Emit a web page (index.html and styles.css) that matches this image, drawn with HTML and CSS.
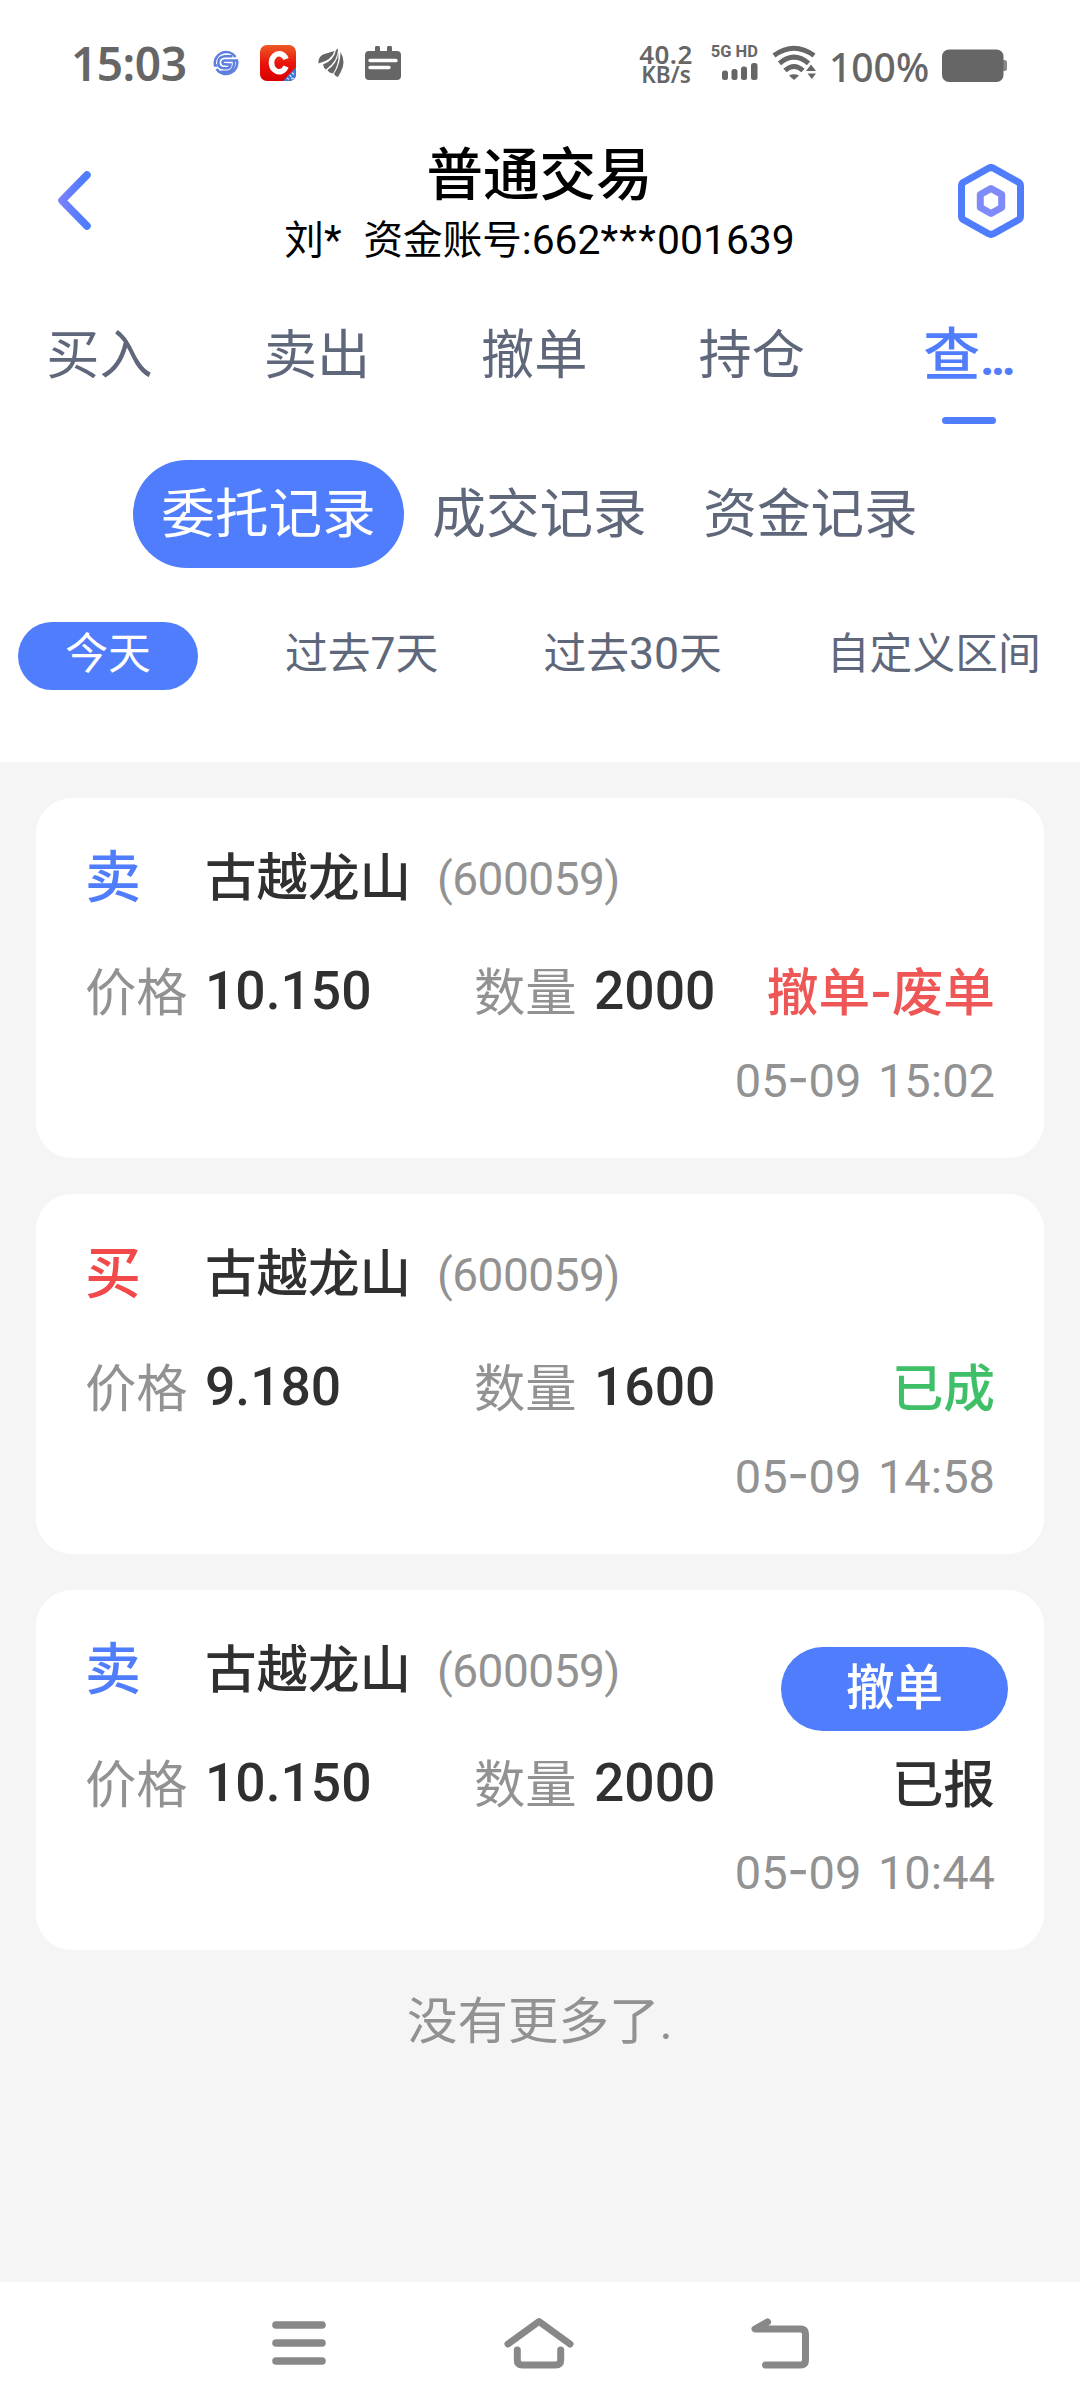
FILE: index.html
```html
<!DOCTYPE html>
<html lang="zh-CN">
<head>
<meta charset="utf-8">
<title>普通交易</title>
<link rel="stylesheet" href="styles.css">
</head>
<body>
<div class="screen">
  <header class="top">
    <div class="status">
      <span class="clock">15:03</span>
      <div class="notices">
        <svg width="26" height="26" viewBox="0 0 26 26" fill="none" stroke="#5f7fe0" stroke-width="2.500">
          <path d="M22.500 7A11.300 11.300 0 0 0 2 15.500H4.500"/>
          <path d="M3.500 19A11.300 11.300 0 0 0 24 10.500H12Q9.500 10.500 9.500 12.500T12 14.300H13.500"/>
          <path d="M19.500 6.300H12Q5.300 6.800 5.300 12.500T11 18.300H14Q17.500 18 17.500 14.500H13"/>
          <path d="M7.500 21.800H14Q20 21.500 21 14.500V11"/>
        </svg>
        <svg class="app-c" width="36" height="36" viewBox="0 0 36 36">
          <defs>
            <linearGradient id="red" x1="0" y1="0" x2="0" y2="1"><stop offset="0" stop-color="#ee5a24"/><stop offset=".5" stop-color="#e9150b"/><stop offset="1" stop-color="#d90000"/></linearGradient>
            <clipPath id="tile"><rect width="36" height="36" rx="7"/></clipPath>
          </defs>
          <g clip-path="url(#tile)">
            <rect width="36" height="36" fill="url(#red)"/>
            <path d="M36 22V36H23Z" fill="#3f78d6"/>
            <path d="M27 33l2 1.500M29.500 30l2 2M32 27.500l2 2M31 33.500h3" stroke="#c9dcff" stroke-width="1.300"/>
            <path d="M26 14A7.600 9 0 1 0 26 21.500" fill="none" stroke="#fff" stroke-width="5.600"/>
          </g>
        </svg>
        <svg class="wing" width="26" height="30" viewBox="0 0 26 30" fill="#666">
          <path d="M.5 15.500Q0 9 5 6.500Q9 5 16.500 3Q14 12 .5 15.500Z"/>
          <path d="M18 2L20 .5Q20.500 12 8 21.500Q5.500 20 5 16.500Q16 12.500 18 2Z"/>
          <path d="M20.500 5Q21 16.500 15 25.500Q11 25 9.500 22Q19 15.500 20.500 5Z"/>
          <path d="M22.500 4Q28.500 14 22.500 24.500L20 29Q17 28.500 16 25.800Q22.500 16 22.500 4Z"/>
        </svg>
        <svg width="36" height="34" viewBox="0 0 36 34">
          <path d="M4 5H10V2a2 2 0 0 1 5 0V5H22V2a2 2 0 0 1 5 0V5H32a4 4 0 0 1 4 4V30a4 4 0 0 1-4 4H4a4 4 0 0 1-4-4V9a4 4 0 0 1 4-4Z" fill="#666"/>
          <path d="M5 14.500H31M5 21.500H24" stroke="#fff" stroke-width="3.400" stroke-linecap="round"/>
        </svg>
      </div>
      <div class="system">
        <div class="speed"><span class="rate">40.2</span><span class="unit">KB/s</span></div>
        <div class="cell">
          <span class="net">5G HD</span>
          <svg width="36" height="17" viewBox="0 0 36 17" fill="#666"><rect x="0" y="7.500" width="6" height="9.500" rx="2.500"/><rect x="9.500" y="6" width="6" height="11" rx="2.500"/><rect x="19" y="3.500" width="6" height="13.500" rx="2.500"/><rect x="29" y="0" width="6.500" height="17" rx="2.500"/></svg>
        </div>
        <svg class="wifi" width="46" height="36" viewBox="0 0 46 36" fill="none" stroke="#666" stroke-width="5">
          <path d="M2 10.500Q22 -4 42 10.500"/>
          <path d="M7.500 18.300Q22 6 36.500 18.300"/>
          <path d="M13 25.500Q22 17.500 31 25.500"/>
          <path d="M17 30.500Q22 28 27 30.500L22 35Z" fill="#666" stroke="none"/>
          <path d="M34 26L39 19.500L44 26ZM35.500 28.500H44L39.800 34Z" fill="#666" stroke="none"/>
        </svg>
        <span class="percent">100%</span>
        <svg class="battery" width="66" height="34" viewBox="0 0 66 34" fill="#666"><path d="M60 11h2.500a2.500 2.500 0 0 1 2.500 2.500v6a2.500 2.500 0 0 1-2.500 2.500H60Z" fill="#888"/><rect x="0" y="0.500" width="61.500" height="32.500" rx="7"/></svg>
      </div>
    </div>

    <div class="titlebar">
      <svg class="back" width="34" height="60" viewBox="0 0 34 60">
        <defs><linearGradient id="tip" gradientUnits="userSpaceOnUse" x1="2" y1="0" x2="26" y2="0"><stop offset="0" stop-color="#7c80fb"/><stop offset="1" stop-color="#4f7dfb"/></linearGradient></defs>
        <path d="M30 5L5 30.500L30 56" fill="none" stroke="url(#tip)" stroke-width="7.500" stroke-linecap="round" stroke-linejoin="round"/>
      </svg>
      <div class="heading">
        <h1>普通交易</h1>
        <p class="account"><span>刘<i class="num">*</i></span><span>资金账号<i class="num">:662<i class="stars">***</i>001639</i></span></p>
      </div>
      <svg class="settings" width="66" height="76" viewBox="0 0 66 76" fill="none" stroke-linejoin="round">
        <path d="M30.500 5.300Q33 4 35.500 5.300L60.500 19.200Q62.500 20.500 62.500 23V53Q62.500 55.500 60.500 56.800L35.500 70.700Q33 72 30.500 70.700L5.500 56.800Q3.500 55.500 3.500 53V23Q3.500 20.500 5.500 19.200Z" stroke="#4f7dfb" stroke-width="7"/>
        <path d="M33 25.500L43.700 31.500V44.500L33 50.500L22.300 44.500V31.500Z" stroke="#7f8bf9" stroke-width="7"/>
      </svg>
    </div>

    <nav class="tabs">
      <a>买入</a><a>卖出</a><a>撤单</a><a>持仓</a><a class="active"><span>查<i class="dots">…</i></span></a>
    </nav>

    <nav class="segments">
      <a class="active">委托记录</a><a>成交记录</a><a>资金记录</a>
    </nav>

    <nav class="ranges">
      <a class="active">今天</a><a>过去<i class="num">7</i>天</a><a>过去<i class="num">30</i>天</a><a>自定义区间</a>
    </nav>
  </header>

  <main class="list">
    <article class="card">
      <div class="stock"><b class="side sell">卖</b><span class="name">古越龙山</span><span class="code">(600059)</span></div>
      <div class="deal"><span class="label">价格</span><span class="value">10.150</span><span class="label">数量</span><span class="value">2000</span><span class="state void">撤单<i class="dash">-</i>废单</span></div>
      <time>05<i class="dash">-</i>09 15:02</time>
    </article>
    <article class="card">
      <div class="stock"><b class="side buy">买</b><span class="name">古越龙山</span><span class="code">(600059)</span></div>
      <div class="deal"><span class="label">价格</span><span class="value">9.180</span><span class="label">数量</span><span class="value">1600</span><span class="state done">已成</span></div>
      <time>05<i class="dash">-</i>09 14:58</time>
    </article>
    <article class="card">
      <div class="stock"><b class="side sell">卖</b><span class="name">古越龙山</span><span class="code">(600059)</span><button class="cancel">撤单</button></div>
      <div class="deal"><span class="label">价格</span><span class="value">10.150</span><span class="label">数量</span><span class="value">2000</span><span class="state">已报</span></div>
      <time>05<i class="dash">-</i>09 10:44</time>
    </article>
    <p class="end">没有更多了<span>.</span></p>
  </main>

  <footer class="sysnav">
    <svg width="54" height="54" viewBox="0 0 54 54" stroke="#888" stroke-width="7.600" stroke-linecap="round"><path d="M4 9H50M4 27H50M4 45H50"/></svg>
    <svg width="70" height="54" viewBox="0 0 70 54" fill="none" stroke="#888" stroke-width="7" stroke-linecap="round" stroke-linejoin="round"><path d="M4 28L35 5.500L66 28"/><path d="M13.300 34V44Q13.300 49 18.300 49H51.700Q56.700 49 56.700 44V34"/></svg>
    <svg width="58" height="54" viewBox="0 0 58 54" fill="none" stroke="#888" stroke-width="7" stroke-linecap="round" stroke-linejoin="round"><path d="M16.500 6L4 13H49.500Q54.500 13 54.500 18V44Q54.500 49 49.500 49H14.500"/></svg>
  </footer>
</div>
</body>
</html>
```

FILE: styles.css
```css
* { box-sizing: border-box; margin: 0; padding: 0; }

body {
  background: #fff;
  font-family: Roboto, "Noto Sans CJK SC", sans-serif;
  color: #303030;
}

i { font-style: normal; }
svg { display: block; flex: none; }

.screen {
  width: 1080px;
  height: 2408px;
  display: flex;
  flex-direction: column;
  overflow: hidden;
}

.top { height: 762px; background: #fff; }

/* status bar */
.status {
  height: 126px;
  display: flex;
  align-items: center;
  padding: 0 72px 0 71px;
  color: #666;
  font-family: "Noto Sans", sans-serif;
  font-weight: 500;
}
.clock { width: 142px; font-size: 46px; line-height: 60px; font-weight: 600; letter-spacing: -0.500px; }
.notices { display: flex; align-items: center; }
.app-c { margin-left: 21px; }
.wing { margin: 0 21px 0 22px; }
.system { display: flex; align-items: center; margin-left: auto; }
.speed { width: 56px; display: flex; flex-direction: column; align-items: center; margin-right: 16px; padding-top: 1px; font-weight: 600; }
.rate { font-size: 26px; line-height: 22px; letter-spacing: 0.4px; }
.unit { font-size: 22.500px; line-height: 20px; }
.cell { width: 48px; display: flex; flex-direction: column; align-items: flex-end; gap: 5px; margin-right: 14px; }
.net { font: 700 16.500px/12px Roboto, sans-serif; white-space: nowrap; }
.percent { width: 97px; margin: 8px 16px 0 11px; font-size: 39px; line-height: 44px; }
.battery { margin-top: 5px; }

/* title bar */
.titlebar {
  height: 148px;
  display: flex;
  align-items: center;
  justify-content: space-between;
  padding: 0 56px 0 57px;
}
.heading { display: flex; flex-direction: column; align-items: center; gap: 4px; padding: 8px 0 0 30px; color: #000; }
h1 { font-size: 56.5px; line-height: 68px; font-weight: 500; }
.account { display: flex; gap: 22px; font-size: 39.600px; line-height: 52px; white-space: nowrap; }
.account .num { font-size: 40.800px; }
.stars { letter-spacing: 1.3px; }
.settings { margin-top: 2px; }

/* primary tabs */
.tabs { display: flex; gap: 110.400px; padding: 44px 0 0 46px; height: 186px; color: #5f677b; }
.tabs a { width: 107px; height: 106px; font-size: 53.200px; line-height: 76px; white-space: nowrap; text-align: center; }
.tabs .active { display: flex; flex-direction: column; align-items: center; justify-content: space-between; color: #4f7dfb; font-weight: 500; font-size: 57px; }
.tabs .active::after { content: ""; width: 54px; height: 7px; border-radius: 4px; background: #4f7dfb; }
.dots { font-size: 46px; font-weight: 800; }

/* record types */
.segments { display: flex; justify-content: center; height: 162px; padding-right: 1px; }
.segments a { width: 271px; height: 108px; border-radius: 54px; text-align: center; font-size: 53.600px; line-height: 109px; color: #5f677b; }
.segments .active { background: #4f7dfb; color: #fff; }

/* date ranges */
.ranges { display: flex; gap: 105px; padding-left: 18px; font-size: 42.800px; line-height: 65px; color: #5f677b; white-space: nowrap; }
.ranges .num { font-size: 44.500px; }
.ranges .active { width: 180px; height: 68px; margin-right: -18px; border-radius: 34px; text-align: center; background: #4f7dfb; color: #fff; }

/* order list */
.list { flex: 1; display: flex; flex-direction: column; gap: 36px; padding: 36px; background: #f5f5f5; }
.card { height: 360px; flex: none; padding: 49px 49px 0; border-radius: 36px; background: #fff; }
.stock { height: 64px; display: flex; align-items: center; line-height: 64px; }
.side { width: 120px; font-size: 56px; font-weight: 500; line-height: 60px; padding-bottom: 3px; }
.sell { color: #4f7dfb; }
.buy { color: #f24a4a; }
.name { width: 232px; font-size: 51.500px; font-weight: 500; line-height: 66px; }
.code { font-size: 46px; color: #929292; letter-spacing: -0.500px; }
.cancel {
  width: 227px;
  height: 84px;
  margin: 36px -13px 0 auto;
  border: 0;
  border-radius: 42px;
  background: #4f7dfb;
  color: #fff;
  font: 500 48.500px/84px Roboto, "Noto Sans CJK SC", sans-serif;
}
.deal { display: grid; grid-template-columns: 120px 269px 120px 125px 1fr; margin-top: 50px; line-height: 65px; white-space: nowrap; height: 64px; }
.label { font-size: 51.300px; color: #929292; }
.value { font-size: 53.400px; font-weight: 500; line-height: 60px; }
.state { justify-self: end; font-size: 51.700px; font-weight: 500; }
.void { color: #ef5656; }
.done { color: #3fbf68; }
.dash { font-family: "Noto Sans CJK SC", sans-serif; font-size: 60px; line-height: 0; }
time { display: block; margin-top: 26px; text-align: right; font-size: 47px; line-height: 59px; color: #929292; word-spacing: 5px; }
.end { margin-top: 3px; text-align: center; font-size: 50.500px; line-height: 66px; color: #929292; }

/* system navigation */
.sysnav { height: 126px; display: flex; padding: 34px 271px 0 272px; justify-content: space-between; background: #fff; }
```
